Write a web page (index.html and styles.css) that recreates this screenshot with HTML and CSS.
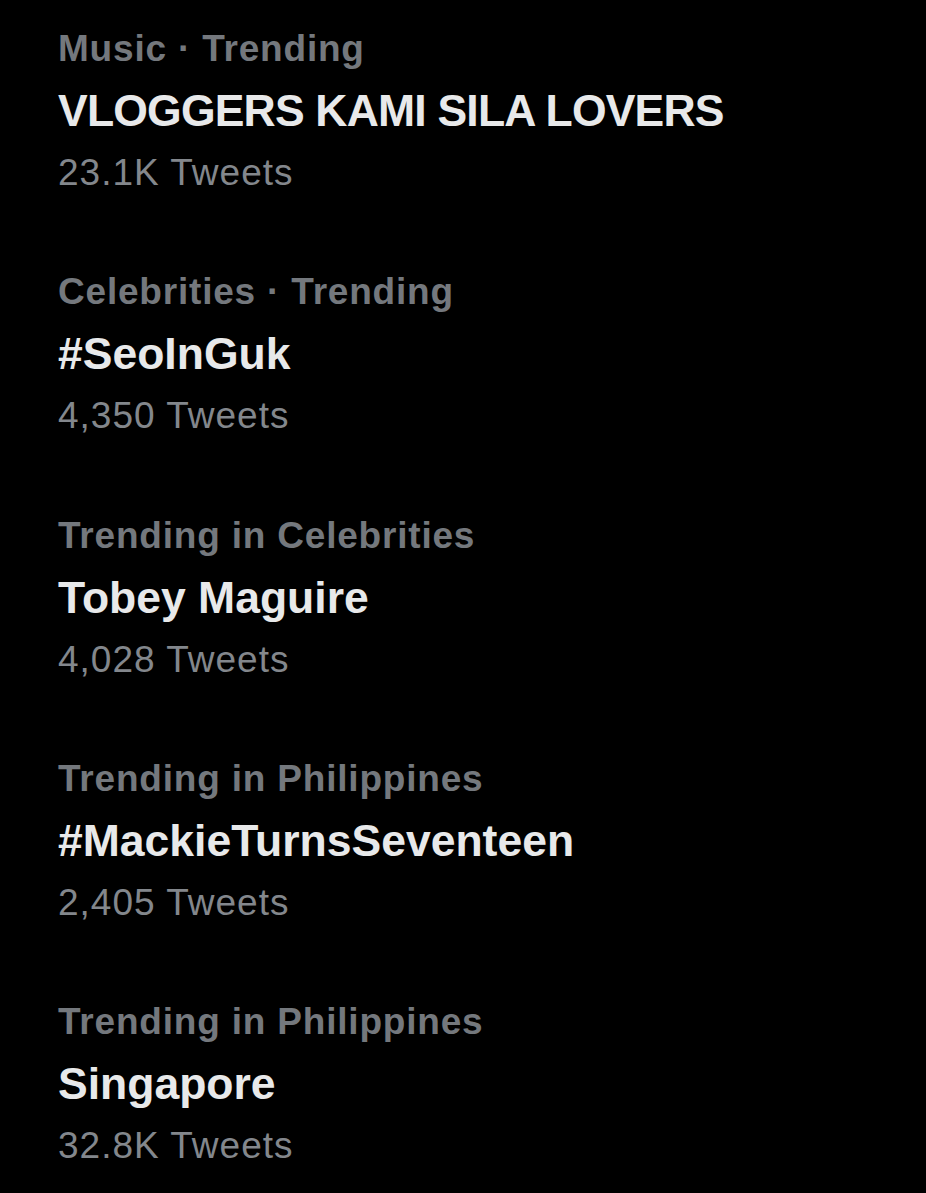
FILE: index.html
```html
<!DOCTYPE html>
<html lang="en">
<head>
<meta charset="utf-8">
<title>Trends</title>
<link rel="stylesheet" href="styles.css">
</head>
<body>
<main class="trends">
  <section class="trend">
    <div class="meta">Music · Trending</div>
    <div class="title title-caps">VLOGGERS KAMI SILA LOVERS</div>
    <div class="count">23.1K Tweets</div>
  </section>
  <section class="trend">
    <div class="meta">Celebrities · Trending</div>
    <div class="title">#SeoInGuk</div>
    <div class="count">4,350 Tweets</div>
  </section>
  <section class="trend">
    <div class="meta">Trending in Celebrities</div>
    <div class="title">Tobey Maguire</div>
    <div class="count">4,028 Tweets</div>
  </section>
  <section class="trend">
    <div class="meta">Trending in Philippines</div>
    <div class="title">#MackieTurnsSeventeen</div>
    <div class="count">2,405 Tweets</div>
  </section>
  <section class="trend">
    <div class="meta">Trending in Philippines</div>
    <div class="title">Singapore</div>
    <div class="count">32.8K Tweets</div>
  </section>
</main>
</body>
</html>
```
FILE: styles.css
```css
html, body {
  margin: 0;
  padding: 0;
  background: #000;
}
body {
  width: 926px;
  height: 1193px;
  overflow: hidden;
  font-family: "Liberation Sans", Arial, sans-serif;
}
.trends {
  display: flex;
  flex-direction: column;
  gap: 57.3px;
  padding: 18px 0 0 58px;
}
.trend {
  display: flex;
  flex-direction: column;
}
.meta, .title, .count {
  line-height: 62px;
  white-space: nowrap;
}
.meta {
  font-size: 37px;
  font-weight: 700;
  letter-spacing: 0.8px;
  color: #74787d;
}
.title {
  font-size: 44.5px;
  font-weight: 700;
  color: #e8e9ea;
}
.title-caps {
  letter-spacing: -0.8px;
}
.count {
  font-size: 37px;
  font-weight: 400;
  letter-spacing: 1px;
  color: #83878c;
}
```
